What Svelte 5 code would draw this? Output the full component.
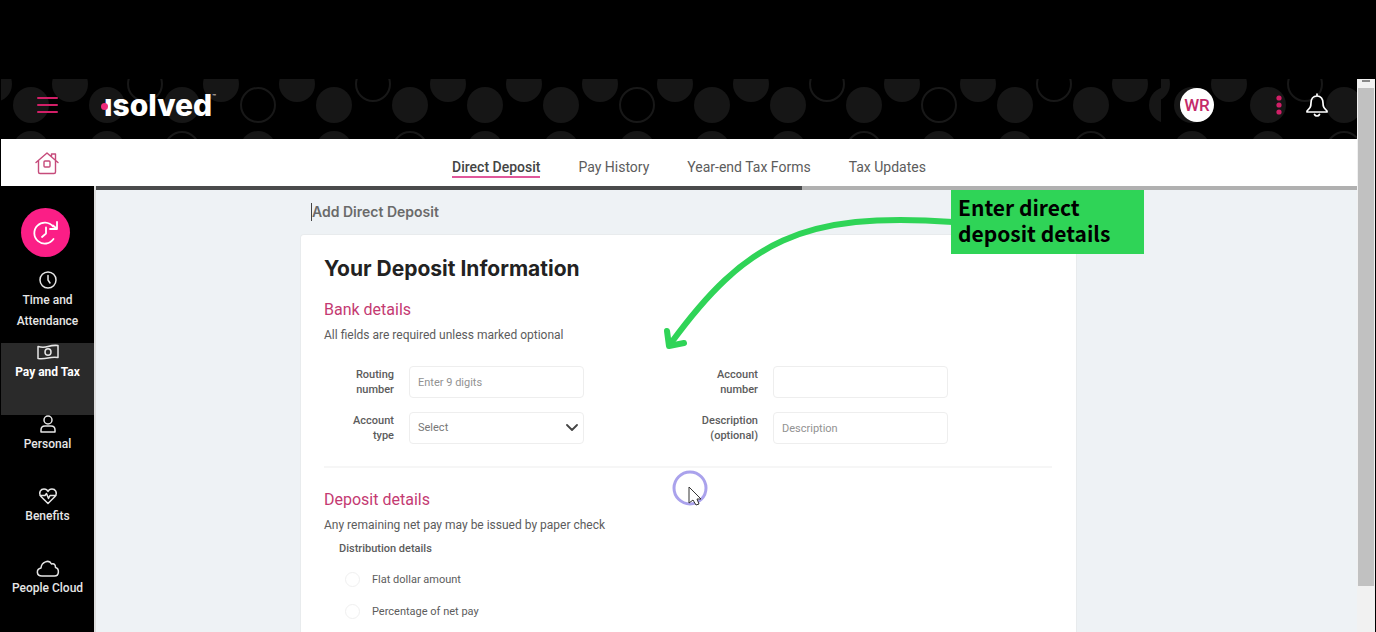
<script>
  const spacing = 76;
  const column = (i, start) => Math.round(start + i * 75.7);

  const rows = [
    { y: 5, start: -7, count: 16, rings: [2, 5, 11, 14] },
    { y: 26, start: 30, count: 16, rings: [3, 8, 12] },
    { y: 70, start: 30, count: 15, rings: [2, 5, 11, 14] }
  ];
  const dots = rows.flatMap((r) =>
    Array.from({ length: r.count }, (_, i) => ({
      x: column(i, r.start),
      y: r.y,
      ring: r.rings.includes(i)
    }))
  );
  const endDots = [
    { x: -9, y: 5 }, { x: 68, y: 5 }, { x: 144, y: 5, ring: true },
    { x: 31, y: 26 }, { x: 31 + spacing, y: 26 }, { x: 31 + 2 * spacing, y: 26 },
    { x: 31, y: 70 }, { x: 31 + spacing, y: 70 }, { x: 31 + 2 * spacing, y: 70, ring: true }
  ];

  const tabs = ['Direct Deposit', 'Pay History', 'Year-end Tax Forms', 'Tax Updates'];
  const menu = [
    { label: 'Time and Attendance', icon: 'clock' },
    { label: 'Pay and Tax', icon: 'cash', active: true },
    { label: 'Personal', icon: 'person' },
    { label: 'Benefits', icon: 'heart' },
    { label: 'People Cloud', icon: 'cloud' }
  ];
</script>

{#snippet pattern(list)}
  {#each list as d}
    <circle
      cx={d.x}
      cy={d.y}
      r={d.ring ? 17 : 18}
      fill={d.ring ? 'none' : '#161616'}
      stroke={d.ring ? '#181818' : 'none'}
      stroke-width="2"
    />
  {/each}
{/snippet}

<div class="page">
  <div class="app">
    <div class="window">
      <header>
        <svg class="dots" aria-hidden="true">
          {@render pattern(dots)}
          <svg x="1160" overflow="hidden" width="400" height="60">
            <rect width="400" height="60" fill="#000" />
            {@render pattern(endDots)}
          </svg>
        </svg>
        <button class="plain menu-button" aria-label="Menu">
          <svg width="22" height="20" viewBox="0 0 22 20" stroke="#d11f67" stroke-width="2" stroke-linecap="round">
            <path d="M2 3h19M2 10h19M2 17h19" />
          </svg>
        </button>
        <a class="logo" href="#home">ısolved<small>™</small></a>
        <div class="account">
          <button class="avatar">WR</button>
          <button class="plain" aria-label="More">
            <svg width="8" height="20" viewBox="0 0 8 20" fill="#d11f67">
              <circle cx="4" cy="3" r="2.600" /><circle cx="4" cy="10" r="2.600" /><circle cx="4" cy="17" r="2.600" />
            </svg>
          </button>
          <button class="plain" aria-label="Notifications">
            <svg width="22" height="24" viewBox="0 0 22 24" fill="none" stroke="#fff" stroke-width="1.700" stroke-linejoin="round" stroke-linecap="round">
              <path d="M11 1v2M11 3c-4 0-6 3-6 7 0 4-1 5-4 8v1h20v-1c-3-3-4-4-4-8 0-4-2-7-6-7zM8.500 21.500c1 2 4 2 5 0" />
            </svg>
          </button>
        </div>
      </header>

      <nav class="top">
        <a class="home" href="#home" aria-label="Home">
          <svg width="24" height="24" viewBox="0 0 24 24" fill="none" stroke="#c64b7b" stroke-width="1.4" stroke-linejoin="round" stroke-linecap="round">
            <path d="M1 11.5 12 2l11 9.500M3.500 10v11q0 1.500 1.500 1.500h14q1.500 0 1.500-1.500V10M16.500 5.500V3h4v6" />
            <rect x="9" y="10" width="6" height="6" rx="1" />
          </svg>
        </a>
        <div class="tabs">
          {#each tabs as tab, i}
            <a href="#tab{i}" class:current={i === 0}>{tab}</a>
          {/each}
        </div>
      </nav>

      <div class="body">
        <aside>
          <button class="punch" aria-label="Clock in">
            <svg width="26" height="26" viewBox="0 0 26 26" fill="none" stroke="#fff" stroke-width="1.8" stroke-linejoin="round" stroke-linecap="round">
              <path d="M20.500 19A10.500 10.500 0 1 1 20 6.500M24 2v7h-7M23.500 8.500 20 5.500M13 7.500v6l-4 3.500" />
            </svg>
          </button>
          {#each menu as item}
            <a class="item" class:active={item.active} href="#{item.icon}">
              <svg width="24" height="18" viewBox="0 0 24 18" fill="none" stroke="#e6e6e6" stroke-width="1.500" stroke-linejoin="round" stroke-linecap="round">
                {#if item.icon === 'clock'}
                  <circle cx="12" cy="9" r="8" /><path d="M12 4.500V9l2 3" />
                {:else if item.icon === 'cash'}
                  <path d="M2 3.500q5 1.500 10 0t10-1v12q-5-.5-10 .5t-10 .5z" /><ellipse cx="12" cy="9" rx="3" ry="3.300" />
                {:else if item.icon === 'person'}
                  <circle cx="12" cy="5" r="4" /><path d="M5 17v-2q0-4 4-4h6q4 0 4 4v2z" />
                {:else if item.icon === 'heart'}
                  <path d="M5 9.500C2 5 5 2 8 2q3 0 4 2.500Q13 2 16 2c3 0 6 3 3 7.500L12 16.500zM4 8.500h5l1.500-2 2 5 1.500-3h6" />
                {:else}
                  <path d="M6 17c-6 0-6-7-1-8C5.500 3 13 0 15.500 5c3-1 4 1 4 3.500 4 1 4 8.500-1 8.500z" />
                {/if}
              </svg>
              <span>{item.label}</span>
            </a>
          {/each}
        </aside>

        <main>
          <div class="progress"><div style="width: 56%"></div></div>
          <div class="content">
            <h1>Add Direct Deposit</h1>
            <form class="card">
              <h2>Your Deposit Information</h2>
              <h3>Bank details</h3>
              <p>All fields are required unless marked optional</p>
              <div class="fields">
                <div class="field">
                  <label for="routing">Routing number</label>
                  <input id="routing" type="text" placeholder="Enter 9 digits" />
                </div>
                <div class="field">
                  <label for="account">Account number</label>
                  <input id="account" type="text" />
                </div>
                <div class="field">
                  <label for="type">Account type</label>
                  <div class="select">
                    <select id="type"><option>Select</option></select>
                    <svg width="12" height="8" viewBox="0 0 12 8" fill="none" stroke="#444" stroke-width="1.800" stroke-linecap="round" stroke-linejoin="round"><path d="m1 1 5 5 5-5" /></svg>
                  </div>
                </div>
                <div class="field">
                  <label for="description">Description (optional)</label>
                  <input id="description" type="text" placeholder="Description" />
                </div>
              </div>
              <hr />
              <h3>Deposit details</h3>
              <p>Any remaining net pay may be issued by paper check</p>
              <fieldset>
                <legend>Distribution details</legend>
                <label><input type="radio" name="distribution" />Flat dollar amount</label>
                <label><input type="radio" name="distribution" />Percentage of net pay</label>
              </fieldset>
            </form>
          </div>
        </main>
      </div>
    </div>
    <div class="scrollbar">
      <div class="up"></div>
      <div class="thumb"></div>
    </div>
  </div>

  <svg class="arrow" width="300" height="150" viewBox="0 0 300 150" fill="none" stroke="#2fd457" stroke-linecap="round" stroke-linejoin="round" aria-hidden="true">
    <path stroke-width="6" d="M293 22C142 11 85 42 11 143" />
    <path stroke-width="6" d="m7 131 2 15 15-3" />
  </svg>
  <div class="callout">Enter direct deposit details</div>
  <svg class="pointer" width="36" height="38" viewBox="0 0 36 38" aria-hidden="true">
    <circle cx="18" cy="18" r="16" fill="none" stroke="#aaa2ec" stroke-width="3" />
    <path d="M17 17v16l4-3 3 5 3-1-2-5h4z" fill="#fff" stroke="#333" stroke-width="1" />
  </svg>
</div>

<style>
  :global(body) {
    background: #000;
  }
  .page {
    position: relative;
    display: flex;
    min-height: 100vh;
    box-sizing: border-box;
    padding: 79px 1px 0 1px;
    font-family: Roboto, sans-serif;
    color: #5c5c5c;
  }
  .page :global(*) {
    box-sizing: border-box;
  }
  a {
    color: inherit;
    text-decoration: none;
  }
  .app {
    flex: 1;
    display: flex;
    min-width: 0;
  }
  .window {
    flex: 1;
    min-width: 0;
    display: flex;
    flex-direction: column;
  }
  header {
    position: relative;
    display: flex;
    align-items: center;
    height: 60px;
    padding: 0 29px 8px 35px;
    background: #000;
  }
  .dots {
    position: absolute;
    inset: 0;
    width: 100%;
    height: 100%;
  }
  header button,
  .logo {
    position: relative;
  }
  .plain {
    display: flex;
    padding: 0;
    border: 0;
    background: none;
  }
  .logo {
    display: flex;
    margin-left: 46px;
    color: #fff;
    font: 800 30px/32px Inter, sans-serif;
  }
  .logo::before {
    content: '';
    position: absolute;
    left: -3px;
    top: 14px;
    width: 7px;
    height: 7px;
    border-radius: 50%;
    background: #ee2a7b;
  }
  .logo small {
    font-size: 6px;
    line-height: 16px;
    font-weight: 400;
  }
  .account {
    display: flex;
    align-items: center;
    margin-left: auto;
  }
  .avatar {
    width: 34px;
    height: 34px;
    margin-right: 61px;
    padding: 0;
    border: 0;
    border-radius: 50%;
    background: #fff;
    color: #c42a6a;
    font: 500 17px/34px Roboto, sans-serif;
  }
  .account .plain + .plain {
    margin-left: 23px;
  }
  .top {
    display: grid;
    grid-template-columns: 1fr auto 1fr;
    align-items: center;
    height: 47px;
    padding-left: 20px;
    background: #fff;
  }
  .home {
    display: flex;
    padding-left: 14px;
  }
  .tabs {
    display: flex;
    gap: 38px;
    padding-top: 10px;
    font-size: 14px;
    line-height: 18px;
  }
  .tabs a {
    border-bottom: 2px solid transparent;
  }
  .tabs .current {
    font-weight: 500;
    color: #444;
    border-color: #e0579a;
  }
  .body {
    flex: 1;
    display: flex;
  }
  aside {
    flex: none;
    width: 93px;
    display: flex;
    flex-direction: column;
    padding-top: 22px;
    background: #000;
  }
  .punch {
    display: flex;
    align-items: center;
    justify-content: center;
    width: 49px;
    height: 49px;
    margin: 0 0 14px 20px;
    padding: 0;
    border: 0;
    border-radius: 50%;
    background: #fb1e86;
  }
  .item {
    display: flex;
    flex-direction: column;
    align-items: center;
    min-height: 72px;
    color: #e6e6e6;
    font-size: 12px;
    font-weight: 500;
    line-height: 21px;
    text-align: center;
  }
  .item span {
    padding: 1px 8px 0;
  }
  .item.active {
    background: #2a2a2a;
    color: #fff;
    font-weight: 700;
  }
  main {
    flex: 1;
    min-width: 0;
    display: flex;
    flex-direction: column;
    background: #eef2f5;
    border-left: 2px solid #ddd;
  }
  .progress {
    height: 4px;
    background: #b0b0b0;
  }
  .progress div {
    height: 100%;
    background: #4a4b4c;
  }
  .content {
    flex: 1;
    display: grid;
    grid-template-columns: 204fr 777fr 280fr;
    grid-template-rows: auto 1fr;
  }
  h1,
  .card {
    grid-column: 2;
  }
  h1 {
    justify-self: start;
    margin: 13px 0 13px 11px;
    border-left: 1px solid #444;
    font: 600 14px/18px Inter, sans-serif;
    color: #6a6a6a;
  }
  .card {
    padding: 20px 24px 0 23px;
    background: #fff;
    border: 1px solid #e8ebed;
    border-bottom: 0;
    border-radius: 4px 4px 0 0;
  }
  h2 {
    margin: 0 0 15px;
    font: 700 21px/28px Inter, sans-serif;
    color: #222;
  }
  h3 {
    margin: 0;
    font-size: 16px;
    font-weight: 400;
    line-height: 24px;
    color: #c43a72;
  }
  p {
    margin: 4px 0 0;
    font-size: 12px;
    line-height: 18px;
  }
  .fields {
    display: grid;
    grid-template-columns: 1fr 1fr;
    row-gap: 14px;
    margin-top: 22px;
  }
  .field {
    display: grid;
    grid-template-columns: 70px 48%;
    column-gap: 15px;
    align-items: center;
  }
  .field label {
    padding-left: 12px;
    font-size: 11px;
    font-weight: 500;
    line-height: 15px;
    text-align: right;
  }
  .field input,
  select {
    display: block;
    width: 100%;
    height: 32px;
    padding: 0 8px;
    border: 1px solid #eee;
    border-radius: 4px;
    background: #fff;
    color: #777;
    font: 11px/16px Roboto, sans-serif;
    appearance: none;
  }
  input::placeholder {
    color: #929292;
  }
  .select {
    position: relative;
  }
  .select svg {
    position: absolute;
    right: 6px;
    top: 12px;
    pointer-events: none;
  }
  hr {
    height: 2px;
    margin: 22px 0 20px;
    border: 0;
    background: #f6f6f6;
  }
  fieldset {
    display: flex;
    flex-direction: column;
    margin: 6px 0 0;
    padding: 0 0 0 15px;
    border: 0;
  }
  legend {
    padding: 0;
    font-size: 11px;
    font-weight: 500;
    line-height: 18px;
  }
  fieldset label {
    display: flex;
    align-items: center;
    gap: 12px;
    height: 32px;
    padding-left: 6px;
    font-size: 11px;
  }
  fieldset legend + label {
    margin-top: 5px;
  }
  fieldset input {
    width: 15px;
    height: 15px;
    margin: 0;
    border: 1px solid #f0f0f0;
    border-radius: 50%;
    appearance: none;
  }
  .scrollbar {
    flex: none;
    width: 18px;
    padding: 0 1px;
    background: #f1f1f1;
  }
  .up {
    height: 9px;
    background: linear-gradient(#888, #888) center 1px / 8px 2px no-repeat;
  }
  .thumb {
    height: 90%;
    max-height: 498px;
    background: #c1c1c1;
  }
  .arrow {
    position: absolute;
    left: 660px;
    top: 200px;
  }
  .callout {
    position: absolute;
    left: 951px;
    top: 190px;
    width: 193px;
    padding: 4px 7px 8px;
    background: #2fd457;
    color: #000;
    font: 700 21px/26px 'Noto Sans CJK SC', sans-serif;
  }
  .pointer {
    position: absolute;
    left: 672px;
    top: 470px;
  }
</style>
